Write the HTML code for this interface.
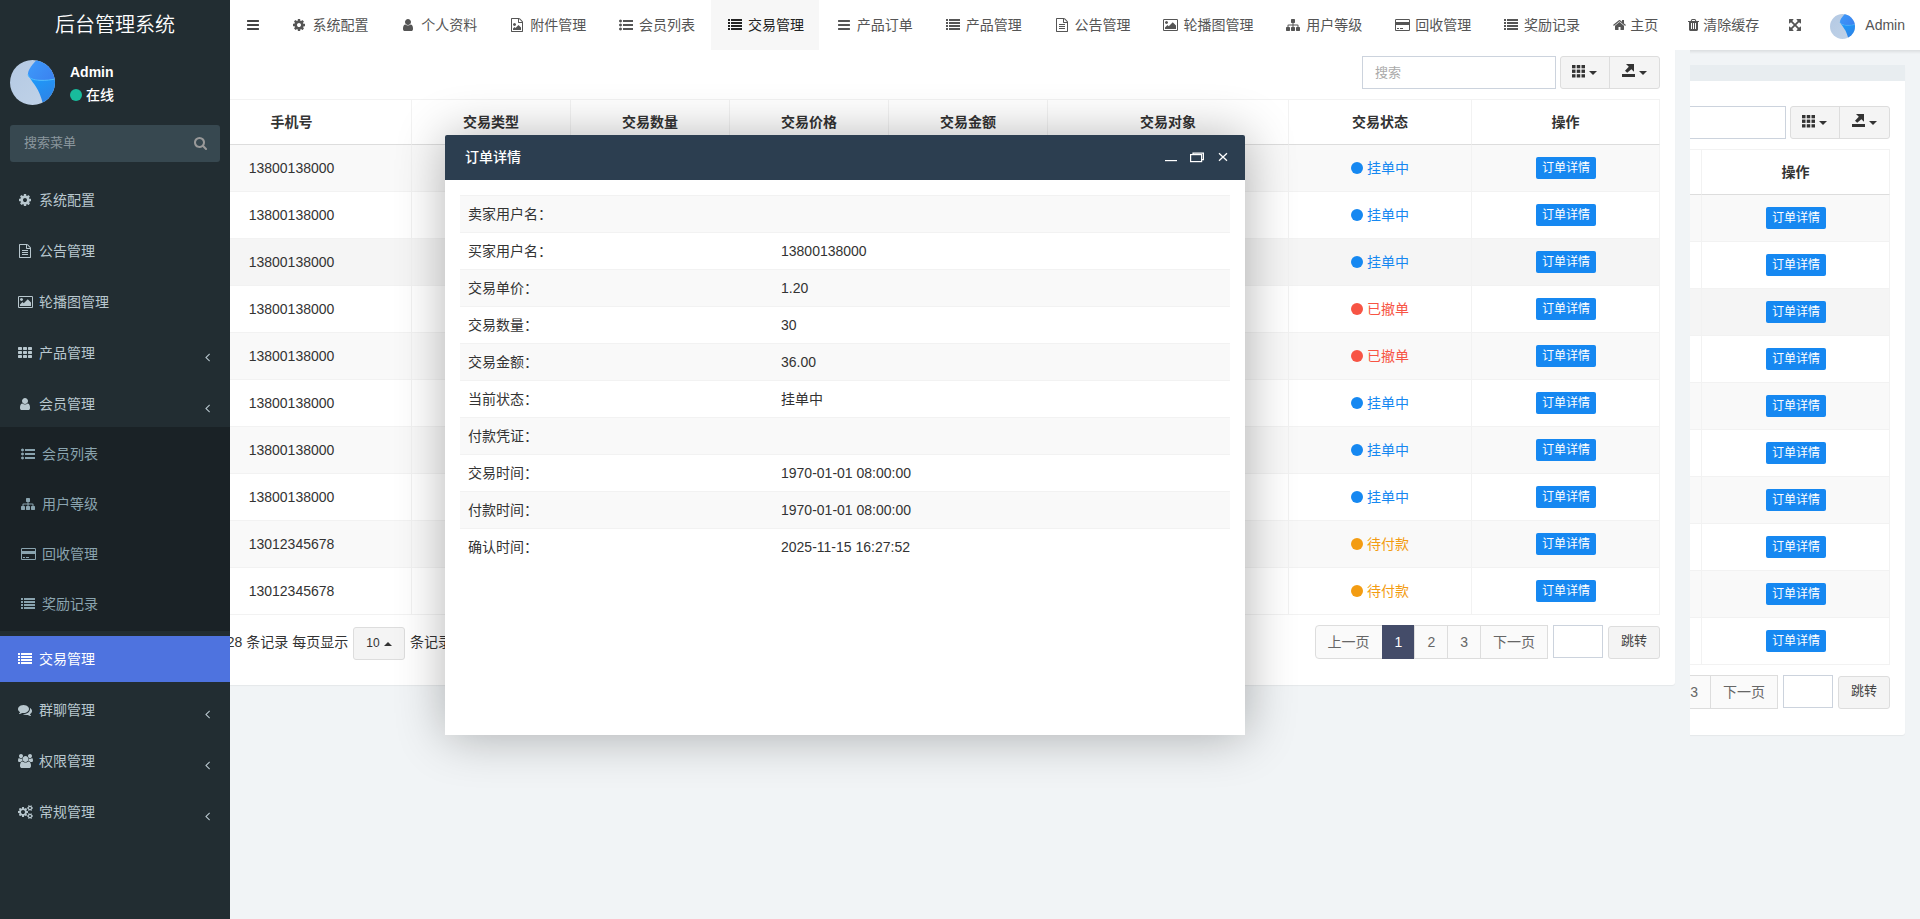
<!DOCTYPE html>
<html lang="zh-CN"><head><meta charset="utf-8"><title>后台管理系统</title>
<style>
*{box-sizing:border-box;margin:0;padding:0}
html,body{width:1920px;height:919px;overflow:hidden;background:#f1f4f6}
body{font-family:"Liberation Sans","Noto Sans CJK SC",sans-serif;font-size:14px;line-height:20px;color:#333;position:relative}
ul{list-style:none}
svg.fa{display:inline-block}
/* sidebar */
.sidebar{position:absolute;left:0;top:0;width:230px;height:919px;background:#222d32;z-index:30}
.logo{height:50px;line-height:50px;text-align:center;color:#fff;font-size:20px;font-weight:350}
.user-panel{position:relative;height:65px}
.avatar{position:absolute;left:10px;top:10px;width:45px;height:45px}
.uname{position:absolute;left:70px;top:12px;color:#fff;font-weight:bold;line-height:20px}
.ustat{position:absolute;left:70px;top:35px;color:#fff;line-height:20px;font-weight:500}
.ustat .dot{display:inline-block;width:12px;height:12px;border-radius:50%;background:#18bc9c;margin-right:4px;vertical-align:-1px}
.sform{position:absolute;left:10px;top:125px;width:210px;height:37px;background:#374850;border-radius:3px}
.sform .ph{position:absolute;left:14px;top:8px;color:#8b979e;line-height:20px;font-size:13px}
.sform .sic{position:absolute;left:184px;top:8px;line-height:20px}
.menu{position:absolute;left:0;top:177px;width:230px}
.mi{margin-bottom:5px}
.mi>a{display:block;height:46px;padding:13px 5px 13px 15px;color:#b8c7ce;position:relative;line-height:20px}
.mi .ic{display:inline-block;width:20px;text-align:center}
.mi .tx{margin-left:4px}
.mi .arr{position:absolute;right:20px;top:17px;color:#b8c7ce}
.mi.active>a{background:#4e73df;color:#fff}
.sub{background:#1a2226;padding:2px 0}
.sub li a{display:block;height:50px;padding:15px 5px 15px 18px;color:#8aa4af;line-height:20px}
/* nav */
.nav{position:absolute;left:230px;top:0;width:1690px;height:50px;background:#fff;z-index:20;color:#555}
.nav .toggle{position:absolute;left:16.5px;top:15px;line-height:20px;color:#444}
.tabs{position:absolute;left:45px;top:0;height:50px;display:flex;white-space:nowrap}
.tab a{display:block;height:50px;padding:15px 15.45px;line-height:20px;color:#555}
.fw{display:inline-block;width:18px;text-align:center;margin-right:4px;font-style:normal}
.fx{display:inline-block;margin-right:4px;font-style:normal}
.tab.active a{background:#f7f7f7;color:#222}
.rmenu{position:absolute;right:0;top:0;height:50px;display:flex;white-space:nowrap}
.rmenu li a{display:block;height:50px;padding:15px 15px;line-height:20px;color:#555}
.rmenu li.r4 a{position:relative;padding-left:49px}
.av25{position:absolute;left:14px;top:14px;width:25px;height:25px}
.av25 svg{display:block}
/* content copies */
.copy{position:absolute;width:1690px;height:919px;background:#f1f4f6}
.copy1{left:0;top:0;z-index:2}
.copy2{left:230px;top:50px;z-index:1}
.copy2::before{content:'';position:absolute;left:1460px;right:0;top:0;height:4px;background:linear-gradient(rgba(0,0,0,.09),rgba(0,0,0,0))}
.pad{padding:15px}
.panel{background:#fff;border-radius:3px;height:670px;position:relative;box-shadow:0 1px 1px rgba(0,0,0,.05)}
.phead{height:16px;background:#e8edf0;margin-bottom:-1px;position:relative;z-index:1}
.pbody{position:relative}
.toolbar{position:absolute;left:0;top:26px;width:1660px;height:33px}
.search{position:absolute;left:1347px;top:0;width:194px;height:33px;border:1px solid #ccd3dd;background:#fff;padding:6px 12px;color:#aaa;line-height:19px;font-size:13px}
.bgroup{position:absolute;left:1545px;top:0;width:100px;height:33px;border:1px solid #ddd;border-radius:3px;background:#f4f4f4}
.bgroup svg,.bgroup i,.bgroup .bdiv{position:absolute}
.bgroup .bdiv{left:48px;top:0;width:1px;height:31px;background:#ddd}
.bgroup .ti{left:11px;top:7.7px}
.bgroup .ei{left:61px;top:7px}
.bgroup .k1{left:28px;top:14px;margin:0}
.bgroup .k2{left:78px;top:14px;margin:0}
.caret{display:inline-block;width:0;height:0;border-left:4px solid transparent;border-right:4px solid transparent;border-top:4px solid #333;vertical-align:middle;margin-left:1px}
.caret.up{border-top:0;border-bottom:4px solid #333}
table{border-collapse:separate;border-spacing:0}
.grid{position:absolute;left:15px;top:69px;width:1630px;table-layout:fixed;border-top:1px solid #f2f2f2;border-left:1px solid #f2f2f2}
.grid th{height:45px;border-right:1px solid #f2f2f2;border-bottom:1px solid #ddd;text-align:center;font-weight:bold;color:#333;vertical-align:middle}
.grid td{height:47px;border-right:1px solid #f2f2f2;border-bottom:1px solid #f2f2f2;text-align:center;vertical-align:middle;color:#333}
.grid tbody tr:nth-child(odd) td{background:#f9f9f9}
.grid tbody tr.hover td{background:#f5f5f5}
.c0{width:141px}.c1{width:240px}.c2,.c3,.c4,.c5{width:159px}.c6{width:241px}.c7{width:183px}.c8{width:188px}
.st.blue{color:#1688f1}.st.red{color:#f75444}.st.orange{color:#f39c12}
.sdot{display:inline-block;width:12px;height:12px;border-radius:50%;background:currentColor;vertical-align:-1px}
.xbtn{display:inline-block;margin-left:1px;background:#1688f1;color:#fff;font-size:12px;line-height:18px;padding:2px 6px;border-radius:2px}
.pager{position:absolute;left:15px;top:595px;width:1630px;height:34px}
.pinfo{position:absolute;left:0;top:0;line-height:34px;white-space:nowrap;color:#333}
.psize{display:inline-block;height:33px;line-height:31px;border:1px solid #ddd;background:#f4f4f4;border-radius:3px;padding:0;width:52px;text-align:center;font-size:12px;vertical-align:middle;margin:0 1px}
.pright{position:absolute;right:0;top:0;height:34px;display:flex;align-items:flex-start}
.pg{display:flex;height:34px}
.pg li{height:34px;line-height:32px;padding:0 12px;border:1px solid #ddd;margin-left:-1px;background:#fafafa;color:#666}
.pg li.first{border-radius:4px 0 0 4px;margin-left:0}
.pg li.last{border-radius:0}
.pg li.act{background:#444c69;border-color:#444c69;color:#fff}
.jin{display:inline-block;width:50px;height:33px;border:1px solid #ccd3dd;background:#fff;margin-left:5px}
.jbtn{display:inline-block;width:52px;height:33px;line-height:28.5px;text-align:center;border:1px solid #ddd;background:#f4f4f4;border-radius:3px;margin-left:5px;margin-top:1px;color:#444;font-size:13px}
/* modal */
.layer{position:absolute;left:445px;top:135px;width:800px;height:600px;background:#fff;z-index:50;box-shadow:1px 1px 50px rgba(0,0,0,.3);border-radius:2px 2px 0 0}
.ltitle{height:45px;line-height:45px;background:#2c3e50;color:#fff;padding-left:20px;font-weight:500;border-radius:2px 2px 0 0}
.lwin{position:absolute;left:720px;top:12px;width:70px;height:20px}
.lbody{padding:15px}
.dt{width:770px;table-layout:fixed}
.dt td{height:37px;border-top:1px solid #f2f2f2;padding:0 8px;vertical-align:middle;color:#333}
.dt tr:nth-child(odd) td{background:#f9f9f9}
.dt .k{width:313px}

</style></head><body>
<div class="copy copy2">
  <div class="pad">
   <div class="panel">
    <div class="phead"></div>
    <div class="pbody">
      <div class="toolbar">
        <div class="search"><span>搜索</span></div>
        <div class="bgroup"><span class="bdiv"></span><svg class="ti" width="13" height="13" viewBox="0 0 13 13"><g fill="#333"><rect x="0.00" y="0.00" width="3.5" height="3.3"/><rect x="4.75" y="0.00" width="3.5" height="3.3"/><rect x="9.50" y="0.00" width="3.5" height="3.3"/><rect x="0.00" y="4.60" width="3.5" height="3.3"/><rect x="4.75" y="4.60" width="3.5" height="3.3"/><rect x="9.50" y="4.60" width="3.5" height="3.3"/><rect x="0.00" y="9.20" width="3.5" height="3.3"/><rect x="4.75" y="9.20" width="3.5" height="3.3"/><rect x="9.50" y="9.20" width="3.5" height="3.3"/></g></svg><i class="caret k1"></i><svg class="ei" width="13" height="13" viewBox="0 0 13 13"><g fill="#333"><rect x="0" y="10" width="13" height="3"/><path d="M4 0 H12 V7.8 L9.4 5.2 L5.2 8.8 L3 6.8 L6.8 2.8 Z"/></g></svg><i class="caret k2"></i></div>
      </div>
      <table class="grid">
        <thead><tr><th class="c0"></th><th class="c1">手机号</th><th class="c2">交易类型</th><th class="c3">交易数量</th><th class="c4">交易价格</th><th class="c5">交易金额</th><th class="c6">交易对象</th><th class="c7">交易状态</th><th class="c8">操作</th></tr></thead>
        <tbody><tr class=""><td class="c0"></td><td class="c1">13800138000</td><td></td><td></td><td></td><td></td><td></td><td class="st blue"><i class="sdot"></i> 挂单中</td><td><span class="xbtn">订单详情</span></td></tr><tr class=""><td class="c0"></td><td class="c1">13800138000</td><td></td><td></td><td></td><td></td><td></td><td class="st blue"><i class="sdot"></i> 挂单中</td><td><span class="xbtn">订单详情</span></td></tr><tr class="hover"><td class="c0"></td><td class="c1">13800138000</td><td></td><td></td><td></td><td></td><td></td><td class="st blue"><i class="sdot"></i> 挂单中</td><td><span class="xbtn">订单详情</span></td></tr><tr class=""><td class="c0"></td><td class="c1">13800138000</td><td></td><td></td><td></td><td></td><td></td><td class="st red"><i class="sdot"></i> 已撤单</td><td><span class="xbtn">订单详情</span></td></tr><tr class=""><td class="c0"></td><td class="c1">13800138000</td><td></td><td></td><td></td><td></td><td></td><td class="st red"><i class="sdot"></i> 已撤单</td><td><span class="xbtn">订单详情</span></td></tr><tr class=""><td class="c0"></td><td class="c1">13800138000</td><td></td><td></td><td></td><td></td><td></td><td class="st blue"><i class="sdot"></i> 挂单中</td><td><span class="xbtn">订单详情</span></td></tr><tr class=""><td class="c0"></td><td class="c1">13800138000</td><td></td><td></td><td></td><td></td><td></td><td class="st blue"><i class="sdot"></i> 挂单中</td><td><span class="xbtn">订单详情</span></td></tr><tr class=""><td class="c0"></td><td class="c1">13800138000</td><td></td><td></td><td></td><td></td><td></td><td class="st blue"><i class="sdot"></i> 挂单中</td><td><span class="xbtn">订单详情</span></td></tr><tr class=""><td class="c0"></td><td class="c1">13012345678</td><td></td><td></td><td></td><td></td><td></td><td class="st orange"><i class="sdot"></i> 待付款</td><td><span class="xbtn">订单详情</span></td></tr><tr class=""><td class="c0"></td><td class="c1">13012345678</td><td></td><td></td><td></td><td></td><td></td><td class="st orange"><i class="sdot"></i> 待付款</td><td><span class="xbtn">订单详情</span></td></tr></tbody>
      </table>
      <div class="pager">
        <div class="pinfo">显示第 1 到第 10 条记录，总共 28 条记录 每页显示 <span class="psize">10 <i class="caret up"></i></span> 条记录</div>
        <div class="pright">
          <ul class="pg"><li class="first">上一页</li><li class="act">1</li><li>2</li><li>3</li><li class="last">下一页</li></ul>
          <span class="jin"></span><span class="jbtn">跳转</span>
        </div>
      </div>
    </div>
   </div>
  </div>
</div>
<div class="copy copy1">
  <div class="pad">
   <div class="panel">
    <div class="phead"></div>
    <div class="pbody">
      <div class="toolbar">
        <div class="search"><span>搜索</span></div>
        <div class="bgroup"><span class="bdiv"></span><svg class="ti" width="13" height="13" viewBox="0 0 13 13"><g fill="#333"><rect x="0.00" y="0.00" width="3.5" height="3.3"/><rect x="4.75" y="0.00" width="3.5" height="3.3"/><rect x="9.50" y="0.00" width="3.5" height="3.3"/><rect x="0.00" y="4.60" width="3.5" height="3.3"/><rect x="4.75" y="4.60" width="3.5" height="3.3"/><rect x="9.50" y="4.60" width="3.5" height="3.3"/><rect x="0.00" y="9.20" width="3.5" height="3.3"/><rect x="4.75" y="9.20" width="3.5" height="3.3"/><rect x="9.50" y="9.20" width="3.5" height="3.3"/></g></svg><i class="caret k1"></i><svg class="ei" width="13" height="13" viewBox="0 0 13 13"><g fill="#333"><rect x="0" y="10" width="13" height="3"/><path d="M4 0 H12 V7.8 L9.4 5.2 L5.2 8.8 L3 6.8 L6.8 2.8 Z"/></g></svg><i class="caret k2"></i></div>
      </div>
      <table class="grid">
        <thead><tr><th class="c0"></th><th class="c1">手机号</th><th class="c2">交易类型</th><th class="c3">交易数量</th><th class="c4">交易价格</th><th class="c5">交易金额</th><th class="c6">交易对象</th><th class="c7">交易状态</th><th class="c8">操作</th></tr></thead>
        <tbody><tr class=""><td class="c0"></td><td class="c1">13800138000</td><td></td><td></td><td></td><td></td><td></td><td class="st blue"><i class="sdot"></i> 挂单中</td><td><span class="xbtn">订单详情</span></td></tr><tr class=""><td class="c0"></td><td class="c1">13800138000</td><td></td><td></td><td></td><td></td><td></td><td class="st blue"><i class="sdot"></i> 挂单中</td><td><span class="xbtn">订单详情</span></td></tr><tr class="hover"><td class="c0"></td><td class="c1">13800138000</td><td></td><td></td><td></td><td></td><td></td><td class="st blue"><i class="sdot"></i> 挂单中</td><td><span class="xbtn">订单详情</span></td></tr><tr class=""><td class="c0"></td><td class="c1">13800138000</td><td></td><td></td><td></td><td></td><td></td><td class="st red"><i class="sdot"></i> 已撤单</td><td><span class="xbtn">订单详情</span></td></tr><tr class=""><td class="c0"></td><td class="c1">13800138000</td><td></td><td></td><td></td><td></td><td></td><td class="st red"><i class="sdot"></i> 已撤单</td><td><span class="xbtn">订单详情</span></td></tr><tr class=""><td class="c0"></td><td class="c1">13800138000</td><td></td><td></td><td></td><td></td><td></td><td class="st blue"><i class="sdot"></i> 挂单中</td><td><span class="xbtn">订单详情</span></td></tr><tr class=""><td class="c0"></td><td class="c1">13800138000</td><td></td><td></td><td></td><td></td><td></td><td class="st blue"><i class="sdot"></i> 挂单中</td><td><span class="xbtn">订单详情</span></td></tr><tr class=""><td class="c0"></td><td class="c1">13800138000</td><td></td><td></td><td></td><td></td><td></td><td class="st blue"><i class="sdot"></i> 挂单中</td><td><span class="xbtn">订单详情</span></td></tr><tr class=""><td class="c0"></td><td class="c1">13012345678</td><td></td><td></td><td></td><td></td><td></td><td class="st orange"><i class="sdot"></i> 待付款</td><td><span class="xbtn">订单详情</span></td></tr><tr class=""><td class="c0"></td><td class="c1">13012345678</td><td></td><td></td><td></td><td></td><td></td><td class="st orange"><i class="sdot"></i> 待付款</td><td><span class="xbtn">订单详情</span></td></tr></tbody>
      </table>
      <div class="pager">
        <div class="pinfo">显示第 1 到第 10 条记录，总共 28 条记录 每页显示 <span class="psize">10 <i class="caret up"></i></span> 条记录</div>
        <div class="pright">
          <ul class="pg"><li class="first">上一页</li><li class="act">1</li><li>2</li><li>3</li><li class="last">下一页</li></ul>
          <span class="jin"></span><span class="jbtn">跳转</span>
        </div>
      </div>
    </div>
   </div>
  </div>
</div>

<aside class="sidebar">
  <div class="logo">后台管理系统</div>
  <div class="user-panel">
    <div class="avatar"><svg width="45" height="45" viewBox="0 0 45 45"><defs><clipPath id="cp45"><circle cx="22.5" cy="22.5" r="22.5"/></clipPath><linearGradient id="lb45" x1="0" y1="0" x2="1" y2="1"><stop offset="0" stop-color="#b4c9e3"/><stop offset="1" stop-color="#c1d3e8"/></linearGradient><linearGradient id="lu45" x1="0" y1="0" x2="1" y2="0.6"><stop offset="0" stop-color="#3d9bfb"/><stop offset="1" stop-color="#3b84f0"/></linearGradient><linearGradient id="ll45" x1="0" y1="0" x2="0.5" y2="1"><stop offset="0" stop-color="#1c9cfc"/><stop offset="1" stop-color="#2e83e6"/></linearGradient></defs><g clip-path="url(#cp45)"><rect width="45" height="45" fill="url(#lb45)"/><path d="M19.5 17.5 C23.5 24 29 28 33 44 L45 45 L45 19 C36 21 26 21 19.5 17.5 Z" fill="url(#ll45)"/><path d="M26.5 0 C21 6 17.4 11 18 15 C19 19 24 20 30 20.3 C36 20.5 41 20 45 19 L45 0 Z" fill="url(#lu45)"/><path d="M18 14 C18.4 19 24 20 30 20.3 C36 20.5 41 20 45 19" fill="none" stroke="#52c4ff" stroke-width="0.8"/></g></svg></div>
    <div class="uname">Admin</div>
    <div class="ustat"><i class="dot"></i>在线</div>
  </div>
  <div class="sform"><span class="ph">搜索菜单</span><span class="sic"><svg class="fa" width="13.00" height="14" viewBox="0 -1536 1664 1792" style="vertical-align:-2.00px;"><path fill="#999" transform="scale(1,-1)" d="M1020.5 387.5Q1152 519 1152.0 704.0Q1152 889 1020.5 1020.5Q889 1152 704.0 1152.0Q519 1152 387.5 1020.5Q256 889 256.0 704.0Q256 519 387.5 387.5Q519 256 704.0 256.0Q889 256 1020.5 387.5ZM1664 -128Q1664 -180 1626.0 -218.0Q1588 -256 1536 -256Q1482 -256 1446 -218L1103 124Q924 0 704 0Q561 0 430.5 55.5Q300 111 205.5 205.5Q111 300 55.5 430.5Q0 561 0.0 704.0Q0 847 55.5 977.5Q111 1108 205.5 1202.5Q300 1297 430.5 1352.5Q561 1408 704.0 1408.0Q847 1408 977.5 1352.5Q1108 1297 1202.5 1202.5Q1297 1108 1352.5 977.5Q1408 847 1408 704Q1408 484 1284 305L1627 -38Q1664 -75 1664 -128Z"/></svg></span></div>
  <ul class="menu">
    <li class="mi"><a><span class="ic"><svg class="fa" width="12.00" height="14" viewBox="0 -1536 1536 1792" style="vertical-align:-2.00px;"><path fill="currentColor" transform="scale(1,-1)" d="M949.0 459.0Q1024 534 1024.0 640.0Q1024 746 949.0 821.0Q874 896 768.0 896.0Q662 896 587.0 821.0Q512 746 512.0 640.0Q512 534 587.0 459.0Q662 384 768.0 384.0Q874 384 949.0 459.0ZM1536 749V527Q1536 515 1528.0 504.0Q1520 493 1508 491L1323 463Q1304 409 1284 372Q1319 322 1391 234Q1401 222 1401.0 209.0Q1401 196 1392 186Q1365 149 1293.0 78.0Q1221 7 1199 7Q1187 7 1173 16L1035 124Q991 101 944 86Q928 -50 915 -100Q908 -128 879 -128H657Q643 -128 632.5 -119.5Q622 -111 621 -98L593 86Q544 102 503 123L362 16Q352 7 337 7Q323 7 312 18Q186 132 147 186Q140 196 140 209Q140 221 148 232Q163 253 199.0 298.5Q235 344 253 369Q226 419 212 468L29 495Q16 497 8.0 507.5Q0 518 0 531V753Q0 765 8.0 776.0Q16 787 27 789L213 817Q227 863 252 909Q212 966 145 1047Q135 1059 135 1071Q135 1081 144 1094Q170 1130 242.5 1201.5Q315 1273 337 1273Q350 1273 363 1263L501 1156Q545 1179 592 1194Q608 1330 621 1380Q628 1408 657 1408H879Q893 1408 903.5 1399.5Q914 1391 915 1378L943 1194Q992 1178 1033 1157L1175 1264Q1184 1273 1199 1273Q1212 1273 1224 1263Q1353 1144 1389 1093Q1396 1085 1396 1071Q1396 1059 1388 1048Q1373 1027 1337.0 981.5Q1301 936 1283 911Q1309 861 1324 813L1507 785Q1520 783 1528.0 772.5Q1536 762 1536 749Z"/></svg></span><span class="tx">系统配置</span></a></li>
    <li class="mi"><a><span class="ic"><svg class="fa" width="12.00" height="14" viewBox="0 -1536 1536 1792" style="vertical-align:-2.00px;"><path fill="currentColor" transform="scale(1,-1)" d="M1468 1156Q1496 1128 1516.0 1080.0Q1536 1032 1536 992V-160Q1536 -200 1508.0 -228.0Q1480 -256 1440 -256H96Q56 -256 28.0 -228.0Q0 -200 0 -160V1440Q0 1480 28.0 1508.0Q56 1536 96 1536H992Q1032 1536 1080.0 1516.0Q1128 1496 1156 1468ZM1024 1400V1024H1400Q1390 1053 1378 1065L1065 1378Q1053 1390 1024 1400ZM1408 -128V896H992Q952 896 924.0 924.0Q896 952 896 992V1408H128V-128ZM384 736Q384 750 393.0 759.0Q402 768 416 768H1120Q1134 768 1143.0 759.0Q1152 750 1152 736V672Q1152 658 1143.0 649.0Q1134 640 1120 640H416Q402 640 393.0 649.0Q384 658 384 672ZM1120 512Q1134 512 1143.0 503.0Q1152 494 1152 480V416Q1152 402 1143.0 393.0Q1134 384 1120 384H416Q402 384 393.0 393.0Q384 402 384 416V480Q384 494 393.0 503.0Q402 512 416 512ZM1120 256Q1134 256 1143.0 247.0Q1152 238 1152 224V160Q1152 146 1143.0 137.0Q1134 128 1120 128H416Q402 128 393.0 137.0Q384 146 384 160V224Q384 238 393.0 247.0Q402 256 416 256Z"/></svg></span><span class="tx">公告管理</span></a></li>
    <li class="mi"><a><span class="ic"><svg class="fa" width="15.00" height="14" viewBox="0 -1536 1920 1792" style="vertical-align:-2.00px;"><path fill="currentColor" transform="scale(1,-1)" d="M584.0 1096.0Q640 1040 640.0 960.0Q640 880 584.0 824.0Q528 768 448.0 768.0Q368 768 312.0 824.0Q256 880 256.0 960.0Q256 1040 312.0 1096.0Q368 1152 448.0 1152.0Q528 1152 584.0 1096.0ZM1664 576V128H256V320L576 640L736 480L1248 992ZM1760 1280H160Q147 1280 137.5 1270.5Q128 1261 128 1248V32Q128 19 137.5 9.5Q147 0 160 0H1760Q1773 0 1782.5 9.5Q1792 19 1792 32V1248Q1792 1261 1782.5 1270.5Q1773 1280 1760 1280ZM1920 1248V32Q1920 -34 1873.0 -81.0Q1826 -128 1760 -128H160Q94 -128 47.0 -81.0Q0 -34 0 32V1248Q0 1314 47.0 1361.0Q94 1408 160 1408H1760Q1826 1408 1873.0 1361.0Q1920 1314 1920 1248Z"/></svg></span><span class="tx">轮播图管理</span></a></li>
    <li class="mi"><a><span class="ic"><svg class="fa" width="14.00" height="14" viewBox="0 -1536 1792 1792" style="vertical-align:-2.00px;"><path fill="currentColor" transform="scale(1,-1)" d="M512 288V96Q512 56 484.0 28.0Q456 0 416 0H96Q56 0 28.0 28.0Q0 56 0 96V288Q0 328 28.0 356.0Q56 384 96 384H416Q456 384 484.0 356.0Q512 328 512 288ZM512 800V608Q512 568 484.0 540.0Q456 512 416 512H96Q56 512 28.0 540.0Q0 568 0 608V800Q0 840 28.0 868.0Q56 896 96 896H416Q456 896 484.0 868.0Q512 840 512 800ZM1152 288V96Q1152 56 1124.0 28.0Q1096 0 1056 0H736Q696 0 668.0 28.0Q640 56 640 96V288Q640 328 668.0 356.0Q696 384 736 384H1056Q1096 384 1124.0 356.0Q1152 328 1152 288ZM512 1312V1120Q512 1080 484.0 1052.0Q456 1024 416 1024H96Q56 1024 28.0 1052.0Q0 1080 0 1120V1312Q0 1352 28.0 1380.0Q56 1408 96 1408H416Q456 1408 484.0 1380.0Q512 1352 512 1312ZM1152 800V608Q1152 568 1124.0 540.0Q1096 512 1056 512H736Q696 512 668.0 540.0Q640 568 640 608V800Q640 840 668.0 868.0Q696 896 736 896H1056Q1096 896 1124.0 868.0Q1152 840 1152 800ZM1792 288V96Q1792 56 1764.0 28.0Q1736 0 1696 0H1376Q1336 0 1308.0 28.0Q1280 56 1280 96V288Q1280 328 1308.0 356.0Q1336 384 1376 384H1696Q1736 384 1764.0 356.0Q1792 328 1792 288ZM1152 1312V1120Q1152 1080 1124.0 1052.0Q1096 1024 1056 1024H736Q696 1024 668.0 1052.0Q640 1080 640 1120V1312Q640 1352 668.0 1380.0Q696 1408 736 1408H1056Q1096 1408 1124.0 1380.0Q1152 1352 1152 1312ZM1792 800V608Q1792 568 1764.0 540.0Q1736 512 1696 512H1376Q1336 512 1308.0 540.0Q1280 568 1280 608V800Q1280 840 1308.0 868.0Q1336 896 1376 896H1696Q1736 896 1764.0 868.0Q1792 840 1792 800ZM1792 1312V1120Q1792 1080 1764.0 1052.0Q1736 1024 1696 1024H1376Q1336 1024 1308.0 1052.0Q1280 1080 1280 1120V1312Q1280 1352 1308.0 1380.0Q1336 1408 1376 1408H1696Q1736 1408 1764.0 1380.0Q1792 1352 1792 1312Z"/></svg></span><span class="tx">产品管理</span><span class="arr"><svg class="fa" width="5.00" height="14" viewBox="0 -1536 640 1792" style="vertical-align:-2.00px;"><path fill="currentColor" transform="scale(1,-1)" d="M617 969 224 576 617 183Q627 173 627.0 160.0Q627 147 617 137L567 87Q557 77 544.0 77.0Q531 77 521 87L55 553Q45 563 45.0 576.0Q45 589 55 599L521 1065Q531 1075 544.0 1075.0Q557 1075 567 1065L617 1015Q627 1005 627.0 992.0Q627 979 617 969Z"/></svg></span></a></li>
    <li class="mi"><a><span class="ic"><svg class="fa" width="10.00" height="14" viewBox="0 -1536 1280 1792" style="vertical-align:-2.00px;"><path fill="currentColor" transform="scale(1,-1)" d="M1280 137Q1280 28 1217.5 -50.0Q1155 -128 1067 -128H213Q125 -128 62.5 -50.0Q0 28 0 137Q0 222 8.5 297.5Q17 373 40.0 449.5Q63 526 98.5 580.5Q134 635 192.5 669.5Q251 704 327 704Q458 576 640.0 576.0Q822 576 953 704Q1029 704 1087.5 669.5Q1146 635 1181.5 580.5Q1217 526 1240.0 449.5Q1263 373 1271.5 297.5Q1280 222 1280 137ZM911.5 1295.5Q1024 1183 1024.0 1024.0Q1024 865 911.5 752.5Q799 640 640.0 640.0Q481 640 368.5 752.5Q256 865 256.0 1024.0Q256 1183 368.5 1295.5Q481 1408 640.0 1408.0Q799 1408 911.5 1295.5Z"/></svg></span><span class="tx">会员管理</span><span class="arr"><svg class="fa" width="5.00" height="14" viewBox="0 -1536 640 1792" style="vertical-align:-2.00px;"><path fill="currentColor" transform="scale(1,-1)" d="M617 969 224 576 617 183Q627 173 627.0 160.0Q627 147 617 137L567 87Q557 77 544.0 77.0Q531 77 521 87L55 553Q45 563 45.0 576.0Q45 589 55 599L521 1065Q531 1075 544.0 1075.0Q557 1075 567 1065L617 1015Q627 1005 627.0 992.0Q627 979 617 969Z"/></svg></span></a><ul class="sub"><li><a><span class="ic"><svg class="fa" width="14.00" height="14" viewBox="0 -1536 1792 1792" style="vertical-align:-2.00px;"><path fill="currentColor" transform="scale(1,-1)" d="M328.0 264.0Q384 208 384.0 128.0Q384 48 328.0 -8.0Q272 -64 192.0 -64.0Q112 -64 56.0 -8.0Q0 48 0.0 128.0Q0 208 56.0 264.0Q112 320 192.0 320.0Q272 320 328.0 264.0ZM328.0 776.0Q384 720 384.0 640.0Q384 560 328.0 504.0Q272 448 192.0 448.0Q112 448 56.0 504.0Q0 560 0.0 640.0Q0 720 56.0 776.0Q112 832 192.0 832.0Q272 832 328.0 776.0ZM1792 224V32Q1792 19 1782.5 9.5Q1773 0 1760 0H544Q531 0 521.5 9.5Q512 19 512 32V224Q512 237 521.5 246.5Q531 256 544 256H1760Q1773 256 1782.5 246.5Q1792 237 1792 224ZM328.0 1288.0Q384 1232 384.0 1152.0Q384 1072 328.0 1016.0Q272 960 192.0 960.0Q112 960 56.0 1016.0Q0 1072 0.0 1152.0Q0 1232 56.0 1288.0Q112 1344 192.0 1344.0Q272 1344 328.0 1288.0ZM1792 736V544Q1792 531 1782.5 521.5Q1773 512 1760 512H544Q531 512 521.5 521.5Q512 531 512 544V736Q512 749 521.5 758.5Q531 768 544 768H1760Q1773 768 1782.5 758.5Q1792 749 1792 736ZM1792 1248V1056Q1792 1043 1782.5 1033.5Q1773 1024 1760 1024H544Q531 1024 521.5 1033.5Q512 1043 512 1056V1248Q512 1261 521.5 1270.5Q531 1280 544 1280H1760Q1773 1280 1782.5 1270.5Q1792 1261 1792 1248Z"/></svg></span><span class="tx">会员列表</span></a></li><li><a><span class="ic"><svg class="fa" width="14.00" height="14" viewBox="0 -1536 1792 1792" style="vertical-align:-2.00px;"><path fill="currentColor" transform="scale(1,-1)" d="M1792 288V-32Q1792 -72 1764.0 -100.0Q1736 -128 1696 -128H1376Q1336 -128 1308.0 -100.0Q1280 -72 1280 -32V288Q1280 328 1308.0 356.0Q1336 384 1376 384H1472V576H960V384H1056Q1096 384 1124.0 356.0Q1152 328 1152 288V-32Q1152 -72 1124.0 -100.0Q1096 -128 1056 -128H736Q696 -128 668.0 -100.0Q640 -72 640 -32V288Q640 328 668.0 356.0Q696 384 736 384H832V576H320V384H416Q456 384 484.0 356.0Q512 328 512 288V-32Q512 -72 484.0 -100.0Q456 -128 416 -128H96Q56 -128 28.0 -100.0Q0 -72 0 -32V288Q0 328 28.0 356.0Q56 384 96 384H192V576Q192 628 230.0 666.0Q268 704 320 704H832V896H736Q696 896 668.0 924.0Q640 952 640 992V1312Q640 1352 668.0 1380.0Q696 1408 736 1408H1056Q1096 1408 1124.0 1380.0Q1152 1352 1152 1312V992Q1152 952 1124.0 924.0Q1096 896 1056 896H960V704H1472Q1524 704 1562.0 666.0Q1600 628 1600 576V384H1696Q1736 384 1764.0 356.0Q1792 328 1792 288Z"/></svg></span><span class="tx">用户等级</span></a></li><li><a><span class="ic"><svg class="fa" width="15.00" height="14" viewBox="0 -1536 1920 1792" style="vertical-align:-2.00px;"><path fill="currentColor" transform="scale(1,-1)" d="M1760 1408Q1826 1408 1873.0 1361.0Q1920 1314 1920 1248V32Q1920 -34 1873.0 -81.0Q1826 -128 1760 -128H160Q94 -128 47.0 -81.0Q0 -34 0 32V1248Q0 1314 47.0 1361.0Q94 1408 160 1408ZM160 1280Q147 1280 137.5 1270.5Q128 1261 128 1248V1024H1792V1248Q1792 1261 1782.5 1270.5Q1773 1280 1760 1280ZM1760 0Q1773 0 1782.5 9.5Q1792 19 1792 32V640H128V32Q128 19 137.5 9.5Q147 0 160 0ZM256 128V256H512V128ZM640 128V256H1024V128Z"/></svg></span><span class="tx">回收管理</span></a></li><li><a><span class="ic"><svg class="fa" width="14.00" height="14" viewBox="0 -1536 1792 1792" style="vertical-align:-2.00px;"><path fill="currentColor" transform="scale(1,-1)" d="M256 224V32Q256 19 246.5 9.5Q237 0 224 0H32Q19 0 9.5 9.5Q0 19 0 32V224Q0 237 9.5 246.5Q19 256 32 256H224Q237 256 246.5 246.5Q256 237 256 224ZM256 608V416Q256 403 246.5 393.5Q237 384 224 384H32Q19 384 9.5 393.5Q0 403 0 416V608Q0 621 9.5 630.5Q19 640 32 640H224Q237 640 246.5 630.5Q256 621 256 608ZM256 992V800Q256 787 246.5 777.5Q237 768 224 768H32Q19 768 9.5 777.5Q0 787 0 800V992Q0 1005 9.5 1014.5Q19 1024 32 1024H224Q237 1024 246.5 1014.5Q256 1005 256 992ZM1792 224V32Q1792 19 1782.5 9.5Q1773 0 1760 0H416Q403 0 393.5 9.5Q384 19 384 32V224Q384 237 393.5 246.5Q403 256 416 256H1760Q1773 256 1782.5 246.5Q1792 237 1792 224ZM256 1376V1184Q256 1171 246.5 1161.5Q237 1152 224 1152H32Q19 1152 9.5 1161.5Q0 1171 0 1184V1376Q0 1389 9.5 1398.5Q19 1408 32 1408H224Q237 1408 246.5 1398.5Q256 1389 256 1376ZM1792 608V416Q1792 403 1782.5 393.5Q1773 384 1760 384H416Q403 384 393.5 393.5Q384 403 384 416V608Q384 621 393.5 630.5Q403 640 416 640H1760Q1773 640 1782.5 630.5Q1792 621 1792 608ZM1792 992V800Q1792 787 1782.5 777.5Q1773 768 1760 768H416Q403 768 393.5 777.5Q384 787 384 800V992Q384 1005 393.5 1014.5Q403 1024 416 1024H1760Q1773 1024 1782.5 1014.5Q1792 1005 1792 992ZM1792 1376V1184Q1792 1171 1782.5 1161.5Q1773 1152 1760 1152H416Q403 1152 393.5 1161.5Q384 1171 384 1184V1376Q384 1389 393.5 1398.5Q403 1408 416 1408H1760Q1773 1408 1782.5 1398.5Q1792 1389 1792 1376Z"/></svg></span><span class="tx">奖励记录</span></a></li></ul></li>
    <li class="mi active"><a><span class="ic"><svg class="fa" width="14.00" height="14" viewBox="0 -1536 1792 1792" style="vertical-align:-2.00px;"><path fill="currentColor" transform="scale(1,-1)" d="M256 224V32Q256 19 246.5 9.5Q237 0 224 0H32Q19 0 9.5 9.5Q0 19 0 32V224Q0 237 9.5 246.5Q19 256 32 256H224Q237 256 246.5 246.5Q256 237 256 224ZM256 608V416Q256 403 246.5 393.5Q237 384 224 384H32Q19 384 9.5 393.5Q0 403 0 416V608Q0 621 9.5 630.5Q19 640 32 640H224Q237 640 246.5 630.5Q256 621 256 608ZM256 992V800Q256 787 246.5 777.5Q237 768 224 768H32Q19 768 9.5 777.5Q0 787 0 800V992Q0 1005 9.5 1014.5Q19 1024 32 1024H224Q237 1024 246.5 1014.5Q256 1005 256 992ZM1792 224V32Q1792 19 1782.5 9.5Q1773 0 1760 0H416Q403 0 393.5 9.5Q384 19 384 32V224Q384 237 393.5 246.5Q403 256 416 256H1760Q1773 256 1782.5 246.5Q1792 237 1792 224ZM256 1376V1184Q256 1171 246.5 1161.5Q237 1152 224 1152H32Q19 1152 9.5 1161.5Q0 1171 0 1184V1376Q0 1389 9.5 1398.5Q19 1408 32 1408H224Q237 1408 246.5 1398.5Q256 1389 256 1376ZM1792 608V416Q1792 403 1782.5 393.5Q1773 384 1760 384H416Q403 384 393.5 393.5Q384 403 384 416V608Q384 621 393.5 630.5Q403 640 416 640H1760Q1773 640 1782.5 630.5Q1792 621 1792 608ZM1792 992V800Q1792 787 1782.5 777.5Q1773 768 1760 768H416Q403 768 393.5 777.5Q384 787 384 800V992Q384 1005 393.5 1014.5Q403 1024 416 1024H1760Q1773 1024 1782.5 1014.5Q1792 1005 1792 992ZM1792 1376V1184Q1792 1171 1782.5 1161.5Q1773 1152 1760 1152H416Q403 1152 393.5 1161.5Q384 1171 384 1184V1376Q384 1389 393.5 1398.5Q403 1408 416 1408H1760Q1773 1408 1782.5 1398.5Q1792 1389 1792 1376Z"/></svg></span><span class="tx">交易管理</span></a></li>
    <li class="mi"><a><span class="ic"><svg class="fa" width="14.00" height="14" viewBox="0 -1536 1792 1792" style="vertical-align:-2.00px;"><path fill="currentColor" transform="scale(1,-1)" d="M704 256Q618 256 528 272Q404 184 250 144Q214 135 164 128H161Q150 128 140.5 136.0Q131 144 129 157Q128 160 128.0 163.5Q128 167 128.5 170.0Q129 173 130.5 176.0Q132 179 133.0 181.0Q134 183 136.5 186.5Q139 190 140.5 191.5Q142 193 145.0 196.5Q148 200 149 201Q154 207 172.0 226.0Q190 245 198.0 255.5Q206 266 220.5 284.5Q235 303 245.5 323.0Q256 343 266 367Q142 439 71.0 544.0Q0 649 0 768Q0 907 94.0 1025.0Q188 1143 350.5 1211.5Q513 1280 704.0 1280.0Q895 1280 1057.5 1211.5Q1220 1143 1314.0 1025.0Q1408 907 1408.0 768.0Q1408 629 1314.0 511.0Q1220 393 1057.5 324.5Q895 256 704 256ZM1792 512Q1792 392 1721.0 287.5Q1650 183 1526 111Q1536 87 1546.5 67.0Q1557 47 1571.5 28.5Q1586 10 1594.0 -0.5Q1602 -11 1620.0 -30.0Q1638 -49 1643 -55Q1644 -56 1647.0 -59.5Q1650 -63 1651.5 -64.5Q1653 -66 1655.5 -69.5Q1658 -73 1659.0 -75.0Q1660 -77 1661.5 -80.0Q1663 -83 1663.5 -86.0Q1664 -89 1664.0 -92.5Q1664 -96 1663 -99Q1660 -113 1650.0 -121.0Q1640 -129 1628 -128Q1578 -121 1542 -112Q1388 -72 1264 16Q1174 0 1088 0Q817 0 616 132Q674 128 704 128Q865 128 1013.0 173.0Q1161 218 1277 302Q1402 394 1469.0 514.0Q1536 634 1536 768Q1536 845 1513 920Q1642 849 1717.0 742.0Q1792 635 1792 512Z"/></svg></span><span class="tx">群聊管理</span><span class="arr"><svg class="fa" width="5.00" height="14" viewBox="0 -1536 640 1792" style="vertical-align:-2.00px;"><path fill="currentColor" transform="scale(1,-1)" d="M617 969 224 576 617 183Q627 173 627.0 160.0Q627 147 617 137L567 87Q557 77 544.0 77.0Q531 77 521 87L55 553Q45 563 45.0 576.0Q45 589 55 599L521 1065Q531 1075 544.0 1075.0Q557 1075 567 1065L617 1015Q627 1005 627.0 992.0Q627 979 617 969Z"/></svg></span></a></li>
    <li class="mi"><a><span class="ic"><svg class="fa" width="15.00" height="14" viewBox="0 -1536 1920 1792" style="vertical-align:-2.00px;"><path fill="currentColor" transform="scale(1,-1)" d="M593 640Q431 635 328 512H194Q112 512 56.0 552.5Q0 593 0 671Q0 1024 124 1024Q130 1024 167.5 1003.0Q205 982 265.0 960.5Q325 939 384 939Q451 939 517 962Q512 925 512 896Q512 757 593 640ZM1664 3Q1664 -117 1591.0 -186.5Q1518 -256 1397 -256H523Q402 -256 329.0 -186.5Q256 -117 256 3Q256 56 259.5 106.5Q263 157 273.5 215.5Q284 274 300.0 324.0Q316 374 343.0 421.5Q370 469 405.0 502.5Q440 536 490.5 556.0Q541 576 602 576Q612 576 645.0 554.5Q678 533 718.0 506.5Q758 480 825.0 458.5Q892 437 960.0 437.0Q1028 437 1095.0 458.5Q1162 480 1202.0 506.5Q1242 533 1275.0 554.5Q1308 576 1318 576Q1379 576 1429.5 556.0Q1480 536 1515.0 502.5Q1550 469 1577.0 421.5Q1604 374 1620.0 324.0Q1636 274 1646.5 215.5Q1657 157 1660.5 106.5Q1664 56 1664 3ZM565.0 1461.0Q640 1386 640.0 1280.0Q640 1174 565.0 1099.0Q490 1024 384.0 1024.0Q278 1024 203.0 1099.0Q128 1174 128.0 1280.0Q128 1386 203.0 1461.0Q278 1536 384.0 1536.0Q490 1536 565.0 1461.0ZM1231.5 1167.5Q1344 1055 1344.0 896.0Q1344 737 1231.5 624.5Q1119 512 960.0 512.0Q801 512 688.5 624.5Q576 737 576.0 896.0Q576 1055 688.5 1167.5Q801 1280 960.0 1280.0Q1119 1280 1231.5 1167.5ZM1920 671Q1920 593 1864.0 552.5Q1808 512 1726 512H1592Q1489 635 1327 640Q1408 757 1408 896Q1408 925 1403 962Q1469 939 1536 939Q1595 939 1655.0 960.5Q1715 982 1752.5 1003.0Q1790 1024 1796 1024Q1920 1024 1920 671ZM1717.0 1461.0Q1792 1386 1792.0 1280.0Q1792 1174 1717.0 1099.0Q1642 1024 1536.0 1024.0Q1430 1024 1355.0 1099.0Q1280 1174 1280.0 1280.0Q1280 1386 1355.0 1461.0Q1430 1536 1536.0 1536.0Q1642 1536 1717.0 1461.0Z"/></svg></span><span class="tx">权限管理</span><span class="arr"><svg class="fa" width="5.00" height="14" viewBox="0 -1536 640 1792" style="vertical-align:-2.00px;"><path fill="currentColor" transform="scale(1,-1)" d="M617 969 224 576 617 183Q627 173 627.0 160.0Q627 147 617 137L567 87Q557 77 544.0 77.0Q531 77 521 87L55 553Q45 563 45.0 576.0Q45 589 55 599L521 1065Q531 1075 544.0 1075.0Q557 1075 567 1065L617 1015Q627 1005 627.0 992.0Q627 979 617 969Z"/></svg></span></a></li>
    <li class="mi"><a><span class="ic"><svg class="fa" width="15.00" height="14" viewBox="0 -1536 1920 1792" style="vertical-align:-2.00px;"><path fill="currentColor" transform="scale(1,-1)" d="M821.0 459.0Q896 534 896.0 640.0Q896 746 821.0 821.0Q746 896 640.0 896.0Q534 896 459.0 821.0Q384 746 384.0 640.0Q384 534 459.0 459.0Q534 384 640.0 384.0Q746 384 821.0 459.0ZM1664 128Q1664 180 1626.0 218.0Q1588 256 1536.0 256.0Q1484 256 1446.0 218.0Q1408 180 1408 128Q1408 75 1445.5 37.5Q1483 0 1536.0 0.0Q1589 0 1626.5 37.5Q1664 75 1664 128ZM1664 1152Q1664 1204 1626.0 1242.0Q1588 1280 1536.0 1280.0Q1484 1280 1446.0 1242.0Q1408 1204 1408 1152Q1408 1099 1445.5 1061.5Q1483 1024 1536.0 1024.0Q1589 1024 1626.5 1061.5Q1664 1099 1664 1152ZM1280 731V546Q1280 536 1273.0 526.5Q1266 517 1257 516L1102 492Q1091 457 1070 416Q1104 368 1160 301Q1167 290 1167 281Q1167 269 1160 262Q1137 232 1077.5 172.5Q1018 113 999 113Q988 113 978 120L863 210Q826 191 786 179Q775 71 763 24Q756 0 733 0H547Q536 0 527.0 7.5Q518 15 517 25L494 178Q460 188 419 209L301 120Q294 113 281 113Q270 113 260 121Q116 254 116 281Q116 290 123 300Q133 314 164.0 353.0Q195 392 211 414Q188 458 176 496L24 520Q14 521 7.0 529.5Q0 538 0 549V734Q0 744 7.0 753.5Q14 763 23 764L178 788Q189 823 210 864Q176 912 120 979Q113 990 113 999Q113 1011 120 1019Q142 1049 202.0 1108.0Q262 1167 281 1167Q292 1167 302 1160L417 1070Q451 1088 494 1102Q505 1210 517 1256Q524 1280 547 1280H733Q744 1280 753.0 1272.5Q762 1265 763 1255L786 1102Q820 1092 861 1071L979 1160Q987 1167 999 1167Q1010 1167 1020 1159Q1164 1026 1164 999Q1164 991 1157 980Q1145 964 1115.0 926.0Q1085 888 1070 866Q1093 818 1104 784L1256 761Q1266 759 1273.0 750.5Q1280 742 1280 731ZM1920 198V58Q1920 42 1771 27Q1759 0 1741 -25Q1792 -138 1792 -163Q1792 -167 1788 -170Q1666 -241 1664 -241Q1656 -241 1618.0 -194.0Q1580 -147 1566 -126Q1546 -128 1536.0 -128.0Q1526 -128 1506 -126Q1492 -147 1454.0 -194.0Q1416 -241 1408 -241Q1406 -241 1284 -170Q1280 -167 1280 -163Q1280 -138 1331 -25Q1313 0 1301 27Q1152 42 1152 58V198Q1152 214 1301 229Q1314 258 1331 281Q1280 394 1280 419Q1280 423 1284 426Q1288 428 1319.0 446.0Q1350 464 1378.0 480.0Q1406 496 1408 496Q1416 496 1454.0 449.5Q1492 403 1506 382Q1526 384 1536.0 384.0Q1546 384 1566 382Q1617 453 1658 494L1664 496Q1668 496 1788 426Q1792 423 1792 419Q1792 394 1741 281Q1758 258 1771 229Q1920 214 1920 198ZM1920 1222V1082Q1920 1066 1771 1051Q1759 1024 1741 999Q1792 886 1792 861Q1792 857 1788 854Q1666 783 1664 783Q1656 783 1618.0 830.0Q1580 877 1566 898Q1546 896 1536.0 896.0Q1526 896 1506 898Q1492 877 1454.0 830.0Q1416 783 1408 783Q1406 783 1284 854Q1280 857 1280 861Q1280 886 1331 999Q1313 1024 1301 1051Q1152 1066 1152 1082V1222Q1152 1238 1301 1253Q1314 1282 1331 1305Q1280 1418 1280 1443Q1280 1447 1284 1450Q1288 1452 1319.0 1470.0Q1350 1488 1378.0 1504.0Q1406 1520 1408 1520Q1416 1520 1454.0 1473.5Q1492 1427 1506 1406Q1526 1408 1536.0 1408.0Q1546 1408 1566 1406Q1617 1477 1658 1518L1664 1520Q1668 1520 1788 1450Q1792 1447 1792 1443Q1792 1418 1741 1305Q1758 1282 1771 1253Q1920 1238 1920 1222Z"/></svg></span><span class="tx">常规管理</span><span class="arr"><svg class="fa" width="5.00" height="14" viewBox="0 -1536 640 1792" style="vertical-align:-2.00px;"><path fill="currentColor" transform="scale(1,-1)" d="M617 969 224 576 617 183Q627 173 627.0 160.0Q627 147 617 137L567 87Q557 77 544.0 77.0Q531 77 521 87L55 553Q45 563 45.0 576.0Q45 589 55 599L521 1065Q531 1075 544.0 1075.0Q557 1075 567 1065L617 1015Q627 1005 627.0 992.0Q627 979 617 969Z"/></svg></span></a></li>
  </ul>
</aside>


<header class="nav">
  <a class="toggle"><svg class="fa" width="12.00" height="14" viewBox="0 -1536 1536 1792" style="vertical-align:-2.00px;"><path fill="currentColor" transform="scale(1,-1)" d="M1536 192V64Q1536 38 1517.0 19.0Q1498 0 1472 0H64Q38 0 19.0 19.0Q0 38 0 64V192Q0 218 19.0 237.0Q38 256 64 256H1472Q1498 256 1517.0 237.0Q1536 218 1536 192ZM1536 704V576Q1536 550 1517.0 531.0Q1498 512 1472 512H64Q38 512 19.0 531.0Q0 550 0 576V704Q0 730 19.0 749.0Q38 768 64 768H1472Q1498 768 1517.0 749.0Q1536 730 1536 704ZM1536 1216V1088Q1536 1062 1517.0 1043.0Q1498 1024 1472 1024H64Q38 1024 19.0 1043.0Q0 1062 0 1088V1216Q0 1242 19.0 1261.0Q38 1280 64 1280H1472Q1498 1280 1517.0 1261.0Q1536 1242 1536 1216Z"/></svg></a>
  <ul class="tabs"><li class="tab"><a><i class="fw"><svg class="fa" width="12.00" height="14" viewBox="0 -1536 1536 1792" style="vertical-align:-2.00px;"><path fill="currentColor" transform="scale(1,-1)" d="M949.0 459.0Q1024 534 1024.0 640.0Q1024 746 949.0 821.0Q874 896 768.0 896.0Q662 896 587.0 821.0Q512 746 512.0 640.0Q512 534 587.0 459.0Q662 384 768.0 384.0Q874 384 949.0 459.0ZM1536 749V527Q1536 515 1528.0 504.0Q1520 493 1508 491L1323 463Q1304 409 1284 372Q1319 322 1391 234Q1401 222 1401.0 209.0Q1401 196 1392 186Q1365 149 1293.0 78.0Q1221 7 1199 7Q1187 7 1173 16L1035 124Q991 101 944 86Q928 -50 915 -100Q908 -128 879 -128H657Q643 -128 632.5 -119.5Q622 -111 621 -98L593 86Q544 102 503 123L362 16Q352 7 337 7Q323 7 312 18Q186 132 147 186Q140 196 140 209Q140 221 148 232Q163 253 199.0 298.5Q235 344 253 369Q226 419 212 468L29 495Q16 497 8.0 507.5Q0 518 0 531V753Q0 765 8.0 776.0Q16 787 27 789L213 817Q227 863 252 909Q212 966 145 1047Q135 1059 135 1071Q135 1081 144 1094Q170 1130 242.5 1201.5Q315 1273 337 1273Q350 1273 363 1263L501 1156Q545 1179 592 1194Q608 1330 621 1380Q628 1408 657 1408H879Q893 1408 903.5 1399.5Q914 1391 915 1378L943 1194Q992 1178 1033 1157L1175 1264Q1184 1273 1199 1273Q1212 1273 1224 1263Q1353 1144 1389 1093Q1396 1085 1396 1071Q1396 1059 1388 1048Q1373 1027 1337.0 981.5Q1301 936 1283 911Q1309 861 1324 813L1507 785Q1520 783 1528.0 772.5Q1536 762 1536 749Z"/></svg></i><span>系统配置</span></a></li><li class="tab"><a><i class="fw"><svg class="fa" width="10.00" height="14" viewBox="0 -1536 1280 1792" style="vertical-align:-2.00px;"><path fill="currentColor" transform="scale(1,-1)" d="M1280 137Q1280 28 1217.5 -50.0Q1155 -128 1067 -128H213Q125 -128 62.5 -50.0Q0 28 0 137Q0 222 8.5 297.5Q17 373 40.0 449.5Q63 526 98.5 580.5Q134 635 192.5 669.5Q251 704 327 704Q458 576 640.0 576.0Q822 576 953 704Q1029 704 1087.5 669.5Q1146 635 1181.5 580.5Q1217 526 1240.0 449.5Q1263 373 1271.5 297.5Q1280 222 1280 137ZM911.5 1295.5Q1024 1183 1024.0 1024.0Q1024 865 911.5 752.5Q799 640 640.0 640.0Q481 640 368.5 752.5Q256 865 256.0 1024.0Q256 1183 368.5 1295.5Q481 1408 640.0 1408.0Q799 1408 911.5 1295.5Z"/></svg></i><span>个人资料</span></a></li><li class="tab"><a><i class="fw"><svg class="fa" width="12.00" height="14" viewBox="0 -1536 1536 1792" style="vertical-align:-2.00px;"><path fill="currentColor" transform="scale(1,-1)" d="M1468 1156Q1496 1128 1516.0 1080.0Q1536 1032 1536 992V-160Q1536 -200 1508.0 -228.0Q1480 -256 1440 -256H96Q56 -256 28.0 -228.0Q0 -200 0 -160V1440Q0 1480 28.0 1508.0Q56 1536 96 1536H992Q1032 1536 1080.0 1516.0Q1128 1496 1156 1468ZM1024 1400V1024H1400Q1390 1053 1378 1065L1065 1378Q1053 1390 1024 1400ZM1408 -128V896H992Q952 896 924.0 924.0Q896 952 896 992V1408H128V-128ZM1280 320V0H256V192L448 384L576 256L960 640ZM584.0 568.0Q528 512 448.0 512.0Q368 512 312.0 568.0Q256 624 256.0 704.0Q256 784 312.0 840.0Q368 896 448.0 896.0Q528 896 584.0 840.0Q640 784 640.0 704.0Q640 624 584.0 568.0Z"/></svg></i><span>附件管理</span></a></li><li class="tab"><a><i class="fw"><svg class="fa" width="14.00" height="14" viewBox="0 -1536 1792 1792" style="vertical-align:-2.00px;"><path fill="currentColor" transform="scale(1,-1)" d="M328.0 264.0Q384 208 384.0 128.0Q384 48 328.0 -8.0Q272 -64 192.0 -64.0Q112 -64 56.0 -8.0Q0 48 0.0 128.0Q0 208 56.0 264.0Q112 320 192.0 320.0Q272 320 328.0 264.0ZM328.0 776.0Q384 720 384.0 640.0Q384 560 328.0 504.0Q272 448 192.0 448.0Q112 448 56.0 504.0Q0 560 0.0 640.0Q0 720 56.0 776.0Q112 832 192.0 832.0Q272 832 328.0 776.0ZM1792 224V32Q1792 19 1782.5 9.5Q1773 0 1760 0H544Q531 0 521.5 9.5Q512 19 512 32V224Q512 237 521.5 246.5Q531 256 544 256H1760Q1773 256 1782.5 246.5Q1792 237 1792 224ZM328.0 1288.0Q384 1232 384.0 1152.0Q384 1072 328.0 1016.0Q272 960 192.0 960.0Q112 960 56.0 1016.0Q0 1072 0.0 1152.0Q0 1232 56.0 1288.0Q112 1344 192.0 1344.0Q272 1344 328.0 1288.0ZM1792 736V544Q1792 531 1782.5 521.5Q1773 512 1760 512H544Q531 512 521.5 521.5Q512 531 512 544V736Q512 749 521.5 758.5Q531 768 544 768H1760Q1773 768 1782.5 758.5Q1792 749 1792 736ZM1792 1248V1056Q1792 1043 1782.5 1033.5Q1773 1024 1760 1024H544Q531 1024 521.5 1033.5Q512 1043 512 1056V1248Q512 1261 521.5 1270.5Q531 1280 544 1280H1760Q1773 1280 1782.5 1270.5Q1792 1261 1792 1248Z"/></svg></i><span>会员列表</span></a></li><li class="tab active"><a><i class="fw"><svg class="fa" width="14.00" height="14" viewBox="0 -1536 1792 1792" style="vertical-align:-2.00px;"><path fill="currentColor" transform="scale(1,-1)" d="M256 224V32Q256 19 246.5 9.5Q237 0 224 0H32Q19 0 9.5 9.5Q0 19 0 32V224Q0 237 9.5 246.5Q19 256 32 256H224Q237 256 246.5 246.5Q256 237 256 224ZM256 608V416Q256 403 246.5 393.5Q237 384 224 384H32Q19 384 9.5 393.5Q0 403 0 416V608Q0 621 9.5 630.5Q19 640 32 640H224Q237 640 246.5 630.5Q256 621 256 608ZM256 992V800Q256 787 246.5 777.5Q237 768 224 768H32Q19 768 9.5 777.5Q0 787 0 800V992Q0 1005 9.5 1014.5Q19 1024 32 1024H224Q237 1024 246.5 1014.5Q256 1005 256 992ZM1792 224V32Q1792 19 1782.5 9.5Q1773 0 1760 0H416Q403 0 393.5 9.5Q384 19 384 32V224Q384 237 393.5 246.5Q403 256 416 256H1760Q1773 256 1782.5 246.5Q1792 237 1792 224ZM256 1376V1184Q256 1171 246.5 1161.5Q237 1152 224 1152H32Q19 1152 9.5 1161.5Q0 1171 0 1184V1376Q0 1389 9.5 1398.5Q19 1408 32 1408H224Q237 1408 246.5 1398.5Q256 1389 256 1376ZM1792 608V416Q1792 403 1782.5 393.5Q1773 384 1760 384H416Q403 384 393.5 393.5Q384 403 384 416V608Q384 621 393.5 630.5Q403 640 416 640H1760Q1773 640 1782.5 630.5Q1792 621 1792 608ZM1792 992V800Q1792 787 1782.5 777.5Q1773 768 1760 768H416Q403 768 393.5 777.5Q384 787 384 800V992Q384 1005 393.5 1014.5Q403 1024 416 1024H1760Q1773 1024 1782.5 1014.5Q1792 1005 1792 992ZM1792 1376V1184Q1792 1171 1782.5 1161.5Q1773 1152 1760 1152H416Q403 1152 393.5 1161.5Q384 1171 384 1184V1376Q384 1389 393.5 1398.5Q403 1408 416 1408H1760Q1773 1408 1782.5 1398.5Q1792 1389 1792 1376Z"/></svg></i><span>交易管理</span></a></li><li class="tab"><a><i class="fw"><svg class="fa" width="12.00" height="14" viewBox="0 -1536 1536 1792" style="vertical-align:-2.00px;"><path fill="currentColor" transform="scale(1,-1)" d="M1536 192V64Q1536 38 1517.0 19.0Q1498 0 1472 0H64Q38 0 19.0 19.0Q0 38 0 64V192Q0 218 19.0 237.0Q38 256 64 256H1472Q1498 256 1517.0 237.0Q1536 218 1536 192ZM1536 704V576Q1536 550 1517.0 531.0Q1498 512 1472 512H64Q38 512 19.0 531.0Q0 550 0 576V704Q0 730 19.0 749.0Q38 768 64 768H1472Q1498 768 1517.0 749.0Q1536 730 1536 704ZM1536 1216V1088Q1536 1062 1517.0 1043.0Q1498 1024 1472 1024H64Q38 1024 19.0 1043.0Q0 1062 0 1088V1216Q0 1242 19.0 1261.0Q38 1280 64 1280H1472Q1498 1280 1517.0 1261.0Q1536 1242 1536 1216Z"/></svg></i><span>产品订单</span></a></li><li class="tab"><a><i class="fw"><svg class="fa" width="14.00" height="14" viewBox="0 -1536 1792 1792" style="vertical-align:-2.00px;"><path fill="currentColor" transform="scale(1,-1)" d="M256 224V32Q256 19 246.5 9.5Q237 0 224 0H32Q19 0 9.5 9.5Q0 19 0 32V224Q0 237 9.5 246.5Q19 256 32 256H224Q237 256 246.5 246.5Q256 237 256 224ZM256 608V416Q256 403 246.5 393.5Q237 384 224 384H32Q19 384 9.5 393.5Q0 403 0 416V608Q0 621 9.5 630.5Q19 640 32 640H224Q237 640 246.5 630.5Q256 621 256 608ZM256 992V800Q256 787 246.5 777.5Q237 768 224 768H32Q19 768 9.5 777.5Q0 787 0 800V992Q0 1005 9.5 1014.5Q19 1024 32 1024H224Q237 1024 246.5 1014.5Q256 1005 256 992ZM1792 224V32Q1792 19 1782.5 9.5Q1773 0 1760 0H416Q403 0 393.5 9.5Q384 19 384 32V224Q384 237 393.5 246.5Q403 256 416 256H1760Q1773 256 1782.5 246.5Q1792 237 1792 224ZM256 1376V1184Q256 1171 246.5 1161.5Q237 1152 224 1152H32Q19 1152 9.5 1161.5Q0 1171 0 1184V1376Q0 1389 9.5 1398.5Q19 1408 32 1408H224Q237 1408 246.5 1398.5Q256 1389 256 1376ZM1792 608V416Q1792 403 1782.5 393.5Q1773 384 1760 384H416Q403 384 393.5 393.5Q384 403 384 416V608Q384 621 393.5 630.5Q403 640 416 640H1760Q1773 640 1782.5 630.5Q1792 621 1792 608ZM1792 992V800Q1792 787 1782.5 777.5Q1773 768 1760 768H416Q403 768 393.5 777.5Q384 787 384 800V992Q384 1005 393.5 1014.5Q403 1024 416 1024H1760Q1773 1024 1782.5 1014.5Q1792 1005 1792 992ZM1792 1376V1184Q1792 1171 1782.5 1161.5Q1773 1152 1760 1152H416Q403 1152 393.5 1161.5Q384 1171 384 1184V1376Q384 1389 393.5 1398.5Q403 1408 416 1408H1760Q1773 1408 1782.5 1398.5Q1792 1389 1792 1376Z"/></svg></i><span>产品管理</span></a></li><li class="tab"><a><i class="fw"><svg class="fa" width="12.00" height="14" viewBox="0 -1536 1536 1792" style="vertical-align:-2.00px;"><path fill="currentColor" transform="scale(1,-1)" d="M1468 1156Q1496 1128 1516.0 1080.0Q1536 1032 1536 992V-160Q1536 -200 1508.0 -228.0Q1480 -256 1440 -256H96Q56 -256 28.0 -228.0Q0 -200 0 -160V1440Q0 1480 28.0 1508.0Q56 1536 96 1536H992Q1032 1536 1080.0 1516.0Q1128 1496 1156 1468ZM1024 1400V1024H1400Q1390 1053 1378 1065L1065 1378Q1053 1390 1024 1400ZM1408 -128V896H992Q952 896 924.0 924.0Q896 952 896 992V1408H128V-128ZM384 736Q384 750 393.0 759.0Q402 768 416 768H1120Q1134 768 1143.0 759.0Q1152 750 1152 736V672Q1152 658 1143.0 649.0Q1134 640 1120 640H416Q402 640 393.0 649.0Q384 658 384 672ZM1120 512Q1134 512 1143.0 503.0Q1152 494 1152 480V416Q1152 402 1143.0 393.0Q1134 384 1120 384H416Q402 384 393.0 393.0Q384 402 384 416V480Q384 494 393.0 503.0Q402 512 416 512ZM1120 256Q1134 256 1143.0 247.0Q1152 238 1152 224V160Q1152 146 1143.0 137.0Q1134 128 1120 128H416Q402 128 393.0 137.0Q384 146 384 160V224Q384 238 393.0 247.0Q402 256 416 256Z"/></svg></i><span>公告管理</span></a></li><li class="tab"><a><i class="fw"><svg class="fa" width="15.00" height="14" viewBox="0 -1536 1920 1792" style="vertical-align:-2.00px;"><path fill="currentColor" transform="scale(1,-1)" d="M584.0 1096.0Q640 1040 640.0 960.0Q640 880 584.0 824.0Q528 768 448.0 768.0Q368 768 312.0 824.0Q256 880 256.0 960.0Q256 1040 312.0 1096.0Q368 1152 448.0 1152.0Q528 1152 584.0 1096.0ZM1664 576V128H256V320L576 640L736 480L1248 992ZM1760 1280H160Q147 1280 137.5 1270.5Q128 1261 128 1248V32Q128 19 137.5 9.5Q147 0 160 0H1760Q1773 0 1782.5 9.5Q1792 19 1792 32V1248Q1792 1261 1782.5 1270.5Q1773 1280 1760 1280ZM1920 1248V32Q1920 -34 1873.0 -81.0Q1826 -128 1760 -128H160Q94 -128 47.0 -81.0Q0 -34 0 32V1248Q0 1314 47.0 1361.0Q94 1408 160 1408H1760Q1826 1408 1873.0 1361.0Q1920 1314 1920 1248Z"/></svg></i><span>轮播图管理</span></a></li><li class="tab"><a><i class="fw"><svg class="fa" width="14.00" height="14" viewBox="0 -1536 1792 1792" style="vertical-align:-2.00px;"><path fill="currentColor" transform="scale(1,-1)" d="M1792 288V-32Q1792 -72 1764.0 -100.0Q1736 -128 1696 -128H1376Q1336 -128 1308.0 -100.0Q1280 -72 1280 -32V288Q1280 328 1308.0 356.0Q1336 384 1376 384H1472V576H960V384H1056Q1096 384 1124.0 356.0Q1152 328 1152 288V-32Q1152 -72 1124.0 -100.0Q1096 -128 1056 -128H736Q696 -128 668.0 -100.0Q640 -72 640 -32V288Q640 328 668.0 356.0Q696 384 736 384H832V576H320V384H416Q456 384 484.0 356.0Q512 328 512 288V-32Q512 -72 484.0 -100.0Q456 -128 416 -128H96Q56 -128 28.0 -100.0Q0 -72 0 -32V288Q0 328 28.0 356.0Q56 384 96 384H192V576Q192 628 230.0 666.0Q268 704 320 704H832V896H736Q696 896 668.0 924.0Q640 952 640 992V1312Q640 1352 668.0 1380.0Q696 1408 736 1408H1056Q1096 1408 1124.0 1380.0Q1152 1352 1152 1312V992Q1152 952 1124.0 924.0Q1096 896 1056 896H960V704H1472Q1524 704 1562.0 666.0Q1600 628 1600 576V384H1696Q1736 384 1764.0 356.0Q1792 328 1792 288Z"/></svg></i><span>用户等级</span></a></li><li class="tab"><a><i class="fw"><svg class="fa" width="15.00" height="14" viewBox="0 -1536 1920 1792" style="vertical-align:-2.00px;"><path fill="currentColor" transform="scale(1,-1)" d="M1760 1408Q1826 1408 1873.0 1361.0Q1920 1314 1920 1248V32Q1920 -34 1873.0 -81.0Q1826 -128 1760 -128H160Q94 -128 47.0 -81.0Q0 -34 0 32V1248Q0 1314 47.0 1361.0Q94 1408 160 1408ZM160 1280Q147 1280 137.5 1270.5Q128 1261 128 1248V1024H1792V1248Q1792 1261 1782.5 1270.5Q1773 1280 1760 1280ZM1760 0Q1773 0 1782.5 9.5Q1792 19 1792 32V640H128V32Q128 19 137.5 9.5Q147 0 160 0ZM256 128V256H512V128ZM640 128V256H1024V128Z"/></svg></i><span>回收管理</span></a></li><li class="tab"><a><i class="fw"><svg class="fa" width="14.00" height="14" viewBox="0 -1536 1792 1792" style="vertical-align:-2.00px;"><path fill="currentColor" transform="scale(1,-1)" d="M256 224V32Q256 19 246.5 9.5Q237 0 224 0H32Q19 0 9.5 9.5Q0 19 0 32V224Q0 237 9.5 246.5Q19 256 32 256H224Q237 256 246.5 246.5Q256 237 256 224ZM256 608V416Q256 403 246.5 393.5Q237 384 224 384H32Q19 384 9.5 393.5Q0 403 0 416V608Q0 621 9.5 630.5Q19 640 32 640H224Q237 640 246.5 630.5Q256 621 256 608ZM256 992V800Q256 787 246.5 777.5Q237 768 224 768H32Q19 768 9.5 777.5Q0 787 0 800V992Q0 1005 9.5 1014.5Q19 1024 32 1024H224Q237 1024 246.5 1014.5Q256 1005 256 992ZM1792 224V32Q1792 19 1782.5 9.5Q1773 0 1760 0H416Q403 0 393.5 9.5Q384 19 384 32V224Q384 237 393.5 246.5Q403 256 416 256H1760Q1773 256 1782.5 246.5Q1792 237 1792 224ZM256 1376V1184Q256 1171 246.5 1161.5Q237 1152 224 1152H32Q19 1152 9.5 1161.5Q0 1171 0 1184V1376Q0 1389 9.5 1398.5Q19 1408 32 1408H224Q237 1408 246.5 1398.5Q256 1389 256 1376ZM1792 608V416Q1792 403 1782.5 393.5Q1773 384 1760 384H416Q403 384 393.5 393.5Q384 403 384 416V608Q384 621 393.5 630.5Q403 640 416 640H1760Q1773 640 1782.5 630.5Q1792 621 1792 608ZM1792 992V800Q1792 787 1782.5 777.5Q1773 768 1760 768H416Q403 768 393.5 777.5Q384 787 384 800V992Q384 1005 393.5 1014.5Q403 1024 416 1024H1760Q1773 1024 1782.5 1014.5Q1792 1005 1792 992ZM1792 1376V1184Q1792 1171 1782.5 1161.5Q1773 1152 1760 1152H416Q403 1152 393.5 1161.5Q384 1171 384 1184V1376Q384 1389 393.5 1398.5Q403 1408 416 1408H1760Q1773 1408 1782.5 1398.5Q1792 1389 1792 1376Z"/></svg></i><span>奖励记录</span></a></li></ul>
  <ul class="rmenu">
    <li class="r1"><a><i class="fx"><svg class="fa" width="13.00" height="14" viewBox="0 -1536 1664 1792" style="vertical-align:-2.00px;"><path fill="currentColor" transform="scale(1,-1)" d="M1408 544V64Q1408 38 1389.0 19.0Q1370 0 1344 0H960V384H704V0H320Q294 0 275.0 19.0Q256 38 256 64V544Q256 545 256.5 547.0Q257 549 257 550L832 1024L1407 550Q1408 548 1408 544ZM1631 613 1569 539Q1561 530 1548 528H1545Q1532 528 1524 535L832 1112L140 535Q128 527 116 528Q103 530 95 539L33 613Q25 623 26.0 636.5Q27 650 37 658L756 1257Q788 1283 832.0 1283.0Q876 1283 908 1257L1152 1053V1248Q1152 1262 1161.0 1271.0Q1170 1280 1184 1280H1376Q1390 1280 1399.0 1271.0Q1408 1262 1408 1248V840L1627 658Q1637 650 1638.0 636.5Q1639 623 1631 613Z"/></svg></i><span>主页</span></a></li>
    <li class="r2"><a><i class="fx"><svg class="fa" width="11.00" height="14" viewBox="0 -1536 1408 1792" style="vertical-align:-2.00px;"><path fill="currentColor" transform="scale(1,-1)" d="M512 160V864Q512 878 503.0 887.0Q494 896 480 896H416Q402 896 393.0 887.0Q384 878 384 864V160Q384 146 393.0 137.0Q402 128 416 128H480Q494 128 503.0 137.0Q512 146 512 160ZM768 160V864Q768 878 759.0 887.0Q750 896 736 896H672Q658 896 649.0 887.0Q640 878 640 864V160Q640 146 649.0 137.0Q658 128 672 128H736Q750 128 759.0 137.0Q768 146 768 160ZM1024 160V864Q1024 878 1015.0 887.0Q1006 896 992 896H928Q914 896 905.0 887.0Q896 878 896 864V160Q896 146 905.0 137.0Q914 128 928 128H992Q1006 128 1015.0 137.0Q1024 146 1024 160ZM480 1152H928L880 1269Q873 1278 863 1280H546Q536 1278 529 1269ZM1408 1120V1056Q1408 1042 1399.0 1033.0Q1390 1024 1376 1024H1280V76Q1280 -7 1233.0 -67.5Q1186 -128 1120 -128H288Q222 -128 175.0 -69.5Q128 -11 128 72V1024H32Q18 1024 9.0 1033.0Q0 1042 0 1056V1120Q0 1134 9.0 1143.0Q18 1152 32 1152H341L411 1319Q426 1356 465.0 1382.0Q504 1408 544 1408H864Q904 1408 943.0 1382.0Q982 1356 997 1319L1067 1152H1376Q1390 1152 1399.0 1143.0Q1408 1134 1408 1120Z"/></svg></i><span>清除缓存</span></a></li>
    <li class="r3"><a><svg class="fa" width="12.00" height="14" viewBox="0 -1536 1536 1792" style="vertical-align:-2.00px;"><path fill="currentColor" transform="scale(1,-1)" d="M1283 995 928 640 1283 285 1427 429Q1456 460 1497 443Q1536 426 1536 384V-64Q1536 -90 1517.0 -109.0Q1498 -128 1472 -128H1024Q982 -128 965 -88Q948 -49 979 -19L1123 125L768 480L413 125L557 -19Q588 -49 571 -88Q554 -128 512 -128H64Q38 -128 19.0 -109.0Q0 -90 0 -64V384Q0 426 40 443Q79 460 109 429L253 285L608 640L253 995L109 851Q90 832 64 832Q52 832 40 837Q0 854 0 896V1344Q0 1370 19.0 1389.0Q38 1408 64 1408H512Q554 1408 571 1368Q588 1329 557 1299L413 1155L768 800L1123 1155L979 1299Q948 1329 965 1368Q982 1408 1024 1408H1472Q1498 1408 1517.0 1389.0Q1536 1370 1536 1344V896Q1536 854 1497 837Q1484 832 1472 832Q1446 832 1427 851Z"/></svg></a></li>
    <li class="r4"><a><span class="av25"><svg width="25" height="25" viewBox="0 0 45 45"><defs><clipPath id="cp25"><circle cx="22.5" cy="22.5" r="22.5"/></clipPath><linearGradient id="lb25" x1="0" y1="0" x2="1" y2="1"><stop offset="0" stop-color="#b4c9e3"/><stop offset="1" stop-color="#c1d3e8"/></linearGradient><linearGradient id="lu25" x1="0" y1="0" x2="1" y2="0.6"><stop offset="0" stop-color="#3d9bfb"/><stop offset="1" stop-color="#3b84f0"/></linearGradient><linearGradient id="ll25" x1="0" y1="0" x2="0.5" y2="1"><stop offset="0" stop-color="#1c9cfc"/><stop offset="1" stop-color="#2e83e6"/></linearGradient></defs><g clip-path="url(#cp25)"><rect width="45" height="45" fill="url(#lb25)"/><path d="M19.5 17.5 C23.5 24 29 28 33 44 L45 45 L45 19 C36 21 26 21 19.5 17.5 Z" fill="url(#ll25)"/><path d="M26.5 0 C21 6 17.4 11 18 15 C19 19 24 20 30 20.3 C36 20.5 41 20 45 19 L45 0 Z" fill="url(#lu25)"/><path d="M18 14 C18.4 19 24 20 30 20.3 C36 20.5 41 20 45 19" fill="none" stroke="#52c4ff" stroke-width="0.8"/></g></svg></span><span class="an">Admin</span></a></li>
  </ul>
</header>


<div class="layer">
  <div class="ltitle">订单详情</div>
  <div class="lwin">
    <svg width="70" height="20" viewBox="0 0 70 20">
      <rect x="0" y="13" width="12" height="1.2" fill="#fff"/>
      <g fill="none" stroke="#fff" stroke-width="1.2"><path d="M28 7.6 V6.2 H38.4 V12.6 H36.6"/><rect x="25.6" y="7.6" width="11" height="7"/></g>
      <g stroke="#fff" stroke-width="1.3"><path d="M54 6.3 L62 13.7 M62 6.3 L54 13.7"/></g>
    </svg>
  </div>
  <div class="lbody"><table class="dt"><tbody><tr><td class="k">卖家用户名：</td><td class="v"></td></tr><tr><td class="k">买家用户名：</td><td class="v">13800138000</td></tr><tr><td class="k">交易单价：</td><td class="v">1.20</td></tr><tr><td class="k">交易数量：</td><td class="v">30</td></tr><tr><td class="k">交易金额：</td><td class="v">36.00</td></tr><tr><td class="k">当前状态：</td><td class="v">挂单中</td></tr><tr><td class="k">付款凭证：</td><td class="v"></td></tr><tr><td class="k">交易时间：</td><td class="v">1970-01-01 08:00:00</td></tr><tr><td class="k">付款时间：</td><td class="v">1970-01-01 08:00:00</td></tr><tr><td class="k">确认时间：</td><td class="v">2025-11-15 16:27:52</td></tr></tbody></table></div>
</div>

</body></html>
